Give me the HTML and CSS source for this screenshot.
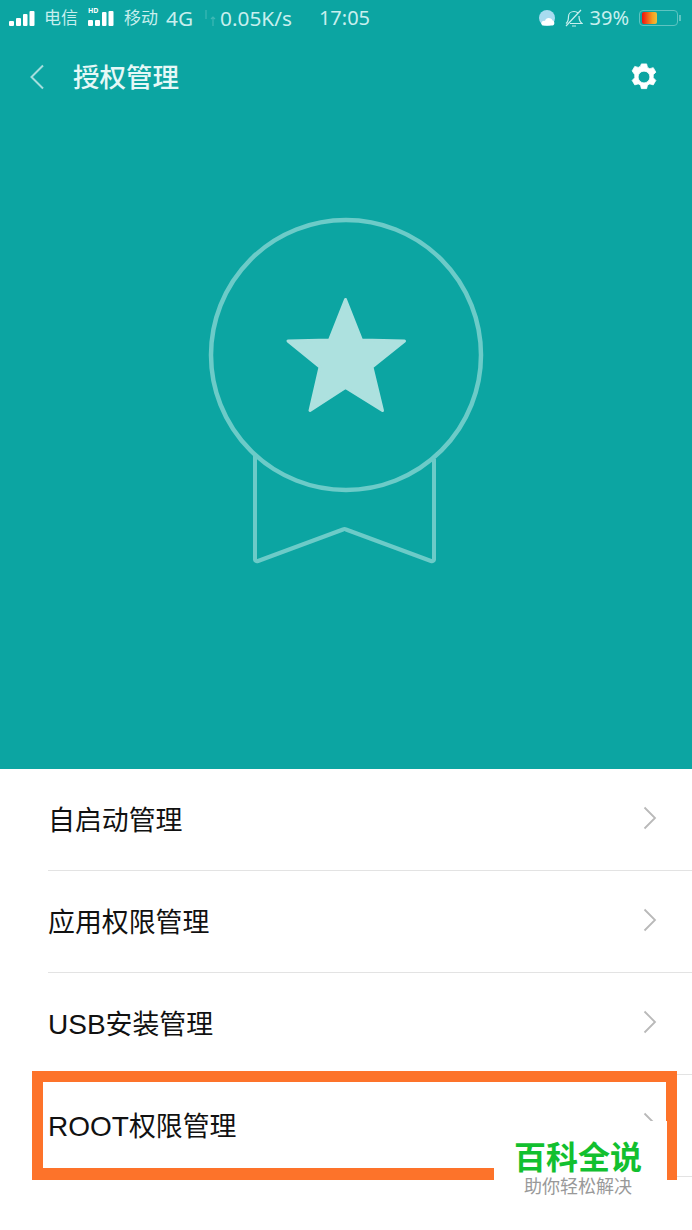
FILE: index.html
```html
<!DOCTYPE html>
<html lang="zh-CN">
<head>
  <meta charset="UTF-8">
  <meta name="viewport" content="width=device-width, initial-scale=1.0">
  <title>授权管理</title>
  <link rel="stylesheet" href="styles.css">
</head>
<body>
  <div class="hero">
    <div class="status-bar">
      <svg class="signal" width="26" height="15" viewBox="0 0 26 15">
        <rect x="0" y="10" width="5" height="5" rx="1"/>
        <rect x="7" y="7" width="5" height="8" rx="1"/>
        <rect x="14" y="3" width="4.500" height="12" rx="1"/>
        <rect x="20.500" y="0" width="5" height="15" rx="1"/>
      </svg>
      <span class="carrier">电信</span>
      <span class="signal-hd">
        <span class="hd">HD</span>
        <svg width="26" height="15" viewBox="0 0 26 15">
          <rect x="0" y="9" width="5" height="6" rx="1"/>
          <rect x="7" y="9" width="5" height="6" rx="1"/>
          <rect x="14" y="1" width="4.500" height="14" rx="1"/>
          <rect x="20.500" y="0" width="5" height="15" rx="1"/>
        </svg>
      </span>
      <span class="carrier carrier-2">移动</span>
      <span class="digits net">4G</span>
      <svg class="updown" width="14" height="18" viewBox="0 0 14 18" fill="none">
        <path d="M3 1v9" stroke="#3fb8b5" stroke-width="1.2"/>
        <path d="M10 17V8M8 10l2-2 2 2" stroke="#3fb8b5" stroke-width="1.2"/>
      </svg>
      <span class="digits speed">0.05K/s</span>
      <span class="digits clock">17:05</span>
      <span class="status-right">
        <svg width="16" height="16" viewBox="0 0 16 16">
          <circle cx="8" cy="8" r="8" fill="#a8dcf0"/>
          <path d="M3.500 15.500c-2.500-2-.5-5.500 2.500-4.500 .5-3.500 6-4 7.500-.5 2.500 .5 2.500 5 0 5z" fill="#fff"/>
        </svg>
        <svg class="bell" width="18" height="18" viewBox="0 0 18 18" fill="none" stroke="#c8efee" stroke-width="1.200">
          <path d="M1 14.500c2-1.500 2.500-3.500 2.500-7 0-3 2.500-5 5.500-5 1.500 0 3 .5 4 1.500M14 7c0 3.500 1 6 3 7.500H5"/>
          <path d="M7 17h4M1 17L16 1"/>
        </svg>
        <span class="digits percent">39%</span>
        <span class="battery"><span class="battery-fill"></span></span>
        <span class="battery-tip"></span>
      </span>
    </div>

    <div class="title-bar">
      <svg class="back" width="16" height="26" viewBox="0 0 16 26" fill="none">
        <path d="M14 1.500L2.500 13 14 24.500" stroke="#a5dedd" stroke-width="2"/>
      </svg>
      <h1>授权管理</h1>
      <svg class="gear" width="30" height="30" viewBox="0 0 24 24">
        <path fill="#fff" stroke="#fff" stroke-width="0.6" stroke-linejoin="round" fill-rule="evenodd" d="M9.900 1.500h4.200l.7 2.800 1.800 1 2.800-.8 2.100 3.600-2.100 2.100v2.400l2.100 2.100-2.100 3.600-2.800-.8-1.800 1-.7 2.800H9.900l-.7-2.800-1.800-1-2.800 .8-2.100-3.600 2.100-2.100v-2.400L2.500 7.100l2.100-3.600 2.800 .8 1.800-1zM12 7.300a4.700 4.700 0 1 0 0 9.400 4.700 4.700 0 0 0 0-9.400z"/>
      </svg>
    </div>

    <svg class="medal" width="280" height="350" viewBox="206 216 280 350" fill="none">
      <path d="M255 454V558a2 2 0 0 0 3 2L343 528.500a3 3 0 0 1 3 0L431 560a2 2 0 0 0 3-2V458" stroke="#6ccbc8" stroke-width="4" stroke-linejoin="round"/>
      <circle cx="346" cy="354" r="135" stroke="#6ccbc8" stroke-width="4.500"/>
      <path d="M345.500 298.500L361.500 339 404.500 340 372 366 382.500 409.500 345.500 386.500 310 409.500 320 366 288 340 329.500 339Z" fill="#ade1df" stroke="#ade1df" stroke-width="3" stroke-linejoin="round"/>
    </svg>
  </div>

  <ul class="menu">
    <li class="menu-row"><span class="menu-label">自启动管理</span><svg class="chevron" width="14" height="24" viewBox="0 0 14 24"><path d="M1.500 1.500L12 12 1.500 22.500"/></svg></li>
    <li class="menu-row"><span class="menu-label">应用权限管理</span><svg class="chevron" width="14" height="24" viewBox="0 0 14 24"><path d="M1.500 1.500L12 12 1.500 22.500"/></svg></li>
    <li class="menu-row"><span class="menu-label"><span class="latin">USB</span>安装管理</span><svg class="chevron" width="14" height="24" viewBox="0 0 14 24"><path d="M1.500 1.500L12 12 1.500 22.500"/></svg></li>
    <li class="menu-row"><span class="menu-label"><span class="latin">ROOT</span>权限管理</span><svg class="chevron" width="14" height="24" viewBox="0 0 14 24"><path d="M1.500 1.500L12 12 1.500 22.500"/></svg></li>
  </ul>

  <div class="highlight"></div>
  <div class="watermark">
    <div class="wm-title">百科全说</div>
    <div class="wm-sub">助你轻松解决</div>
  </div>
</body>
</html>
```

FILE: styles.css
```css
html, body {
  margin: 0;
  padding: 0;
}
body {
  position: relative;
  width: 692px;
  height: 1230px;
  overflow: hidden;
  background-color: #fff;
  font-family: "Liberation Sans", "Noto Sans CJK SC", sans-serif;
}
.hero {
  height: 769px;
  background-color: #0ca5a2;
}
.status-bar {
  display: flex;
  align-items: center;
  height: 36px;
  padding: 0 11px 0 9px;
  color: #c8efee;
  font-size: 17px;
  font-family: "Noto Sans", "Noto Sans CJK SC", sans-serif;
}
.status-bar svg {
  flex: none;
}
.signal,
.signal-hd svg {
  fill: #fff;
}
.signal {
  margin-right: 9px;
}
.signal-hd {
  position: relative;
  display: flex;
  margin-left: 10px;
}
.hd {
  position: absolute;
  left: 0;
  top: -5px;
  font-size: 7px;
  line-height: 10px;
  font-weight: bold;
  color: #fff;
}
.carrier {
  line-height: 36px;
}
.carrier-2 {
  margin-left: 10px;
}
.digits {
  font-size: 20px;
  line-height: 36px;
}
.net {
  margin-left: 8px;
  font-size: 20.800px;
}
.status-bar .updown {
  margin-left: 10px;
}
.speed {
  margin-left: 3px;
  font-size: 20.800px;
}
.clock {
  margin-left: 27px;
}
.status-right {
  display: flex;
  align-items: center;
  margin-left: auto;
}
.status-bar .bell {
  margin-left: 10px;
}
.percent {
  margin-left: 7px;
}
.battery {
  display: block;
  width: 39px;
  height: 16px;
  margin-left: 10px;
  padding: 1px 2px;
  border: 1.500px solid #5ec4c1;
  border-radius: 4px;
  box-sizing: border-box;
}
.battery-fill {
  display: block;
  width: 15px;
  height: 100%;
  border-radius: 2px;
  background: linear-gradient(to right, #f01010, #f7a020 70%, #e8c040);
}
.battery-tip {
  width: 2px;
  height: 6px;
  margin-left: 1px;
  background-color: #5ec4c1;
}
.title-bar {
  display: flex;
  align-items: center;
  height: 82px;
  padding: 0 33px 0 29px;
}
.title-bar h1 {
  margin: 0 0 4px 28px;
  font-size: 26.500px;
  font-weight: 500;
  color: #e6f8f7;
  font-family: "Noto Sans CJK SC", sans-serif;
}
.gear {
  margin-left: auto;
}
.medal {
  display: block;
  margin: 99px auto 0;
}
.menu {
  margin: 0;
  padding: 0 0 0 48px;
  list-style: none;
}
.menu-row {
  display: flex;
  align-items: center;
  justify-content: space-between;
  height: 101px;
  padding-right: 35px;
  border-bottom: 1px solid #e3e3e3;
  font-size: 26.900px;
  color: #111;
}
.menu-label {
  padding-bottom: 2px;
}
.latin {
  font-size: 28px;
}
.chevron {
  fill: none;
  stroke: #b9b9b9;
  stroke-width: 1.800;
  margin-bottom: 3px;
}
.highlight {
  position: absolute;
  left: 32px;
  top: 1071px;
  width: 645px;
  height: 109px;
  border: 11px solid #fd732a;
  border-bottom-width: 12px;
  box-sizing: border-box;
}
.watermark {
  position: absolute;
  left: 494px;
  top: 1121px;
  width: 173px;
  height: 79px;
  padding: 15px 5px 0 0;
  box-sizing: border-box;
  background-color: #fff;
  text-align: center;
  font-family: "Noto Sans CJK SC", sans-serif;
}
.wm-title {
  font-size: 32px;
  line-height: 38px;
  font-weight: 700;
  color: #12c02f;
}
.wm-sub {
  margin-top: 1px;
  font-size: 18px;
  line-height: 20px;
  color: #999;
}
```
